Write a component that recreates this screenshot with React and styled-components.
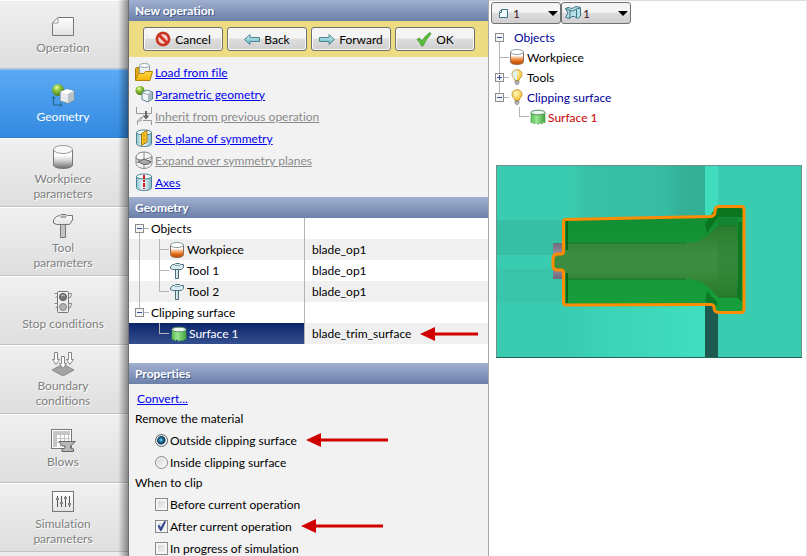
import React, { useState } from "react";
import styled, { createGlobalStyle } from "styled-components";

const GlobalStyle = createGlobalStyle`
  * {
    box-sizing: border-box;
  }

  body {
    margin: 0;
    background: #fff;
    color: #000;
    font-family: Lato, "Open Sans", sans-serif;
    font-size: 12px;
    line-height: 15px;
    font-variant-ligatures: none;
  }

  button, select, input {
    font: inherit;
    margin: 0;
  }

  svg {
    display: block;
    flex: none;
  }
`;

/* gradients shared by all icons */
const IconDefs = () => (
  <Defs width="0" height="0" aria-hidden="true">
    <defs>
      <linearGradient id="grey" x2="0" y2="1">
        <stop offset="0.3" stopColor="#fff" />
        <stop offset="0.55" stopColor="#d8d8d8" />
        <stop offset="1" stopColor="#6c6c6c" />
      </linearGradient>
      <linearGradient id="paper" x2="0" y2="1">
        <stop offset="0" stopColor="#fff" />
        <stop offset="1" stopColor="#e2e2e2" />
      </linearGradient>
      <linearGradient id="orange" x2="0" y2="1">
        <stop offset="0.25" stopColor="#fff" />
        <stop offset="0.5" stopColor="#f3a468" />
        <stop offset="0.75" stopColor="#d9640f" />
        <stop offset="1" stopColor="#b94c00" />
      </linearGradient>
      <linearGradient id="green" x2="1" y2="0">
        <stop offset="0" stopColor="#5cc25a" />
        <stop offset="0.4" stopColor="#9be58f" />
        <stop offset="1" stopColor="#3fa53e" />
      </linearGradient>
      <linearGradient id="teal" x2="1" y2="0">
        <stop offset="0" stopColor="#8cc5d2" />
        <stop offset="0.45" stopColor="#f2fbfd" />
        <stop offset="1" stopColor="#7db6c4" />
      </linearGradient>
      <linearGradient id="arrowFill" x2="0" y2="1">
        <stop offset="0" stopColor="#d4f1f4" />
        <stop offset="1" stopColor="#5fb3c0" />
      </linearGradient>
      <linearGradient id="folder" x2="0" y2="1">
        <stop offset="0" stopColor="#ffd94d" />
        <stop offset="1" stopColor="#f5b400" />
      </linearGradient>
      <radialGradient id="ball" cx="0.4" cy="0.3" r="0.7">
        <stop offset="0" stopColor="#eaffb0" />
        <stop offset="0.4" stopColor="#8fc63a" />
        <stop offset="1" stopColor="#4a7d10" />
      </radialGradient>
      <radialGradient id="bulb" cx="0.4" cy="0.35" r="0.7">
        <stop offset="0" stopColor="#fff6c0" />
        <stop offset="1" stopColor="#f7bd28" />
      </radialGradient>
    </defs>
  </Defs>
);

const Icon = ({ w = 24, h = w, box = `0 0 ${w} ${h}`, children }) => (
  <svg width={w} height={h} viewBox={box} fill="none" aria-hidden="true">
    {children}
  </svg>
);

const OperationIcon = () => (
  <Icon>
    <path d="M7 3.5H22.5V21.5H1.5V9Z" fill="url(#paper)" stroke="#777" />
    <path d="M7 3.5V9H1.5Z" fill="#fff" stroke="#999" />
  </Icon>
);

const GeometryIcon = () => (
  <Icon>
    <circle cx="7" cy="7" r="6" fill="url(#ball)" />
    <path d="M2.500 14V22H11M.5 15.500 2.500 13.500 4.500 15.500M9 20 11 22 9 24" stroke="#23627d" />
    <path d="M9 9 16 6 23 8V17L17 20.500 9 18Z" fill="#e7ebed" stroke="#5c8792" />
    <path d="M9 9 16 6 23 8 17 11Z" fill="#fff" />
    <path d="M17 11 23 8V17L17 20.500Z" fill="#b9c1c5" />
  </Icon>
);

const WorkpieceIcon = () => (
  <Icon>
    <path d="M2.500 4.500V20C2.500 22 7 23.500 12 23.500S21.500 22 21.500 20V4.500Z" fill="url(#grey)" stroke="#777" />
    <ellipse cx="12" cy="4.500" rx="9.500" ry="4" fill="#f8f8f8" stroke="#9a9a9a" />
  </Icon>
);

const ToolIcon = () => (
  <Icon>
    <path d="M9.500 9H14.500V23.500H9.500Z" fill="#c4c4c4" stroke="#777" />
    <path d="M2.500 6 5.500 2.500 9 1.500 10 .5H15L16 1.500H21.500V6L18.500 10.500H5.500L2.500 9Z" fill="url(#paper)" stroke="#777" />
    <path d="M9 4H15L16 1.500H10Z" fill="#aaa" />
  </Icon>
);

const StopIcon = () => (
  <Icon>
    <path d="M3.500 3.500H7V6L4.500 7.500M17 3.500H20.500L19.500 7.500 17 8M3.500 13.500H7V17L4.500 17.500M17 13.500H20.500L19.500 17.500 17 18" stroke="#888" fill="#eee" />
    <rect x="6.500" y="1.500" width="11" height="21" rx="1" fill="#ececec" stroke="#777" />
    <circle cx="12" cy="7" r="3.500" fill="#777" stroke="#555" />
    <circle cx="12" cy="17" r="3.500" fill="#b3b3b3" stroke="#888" />
    <path d="M10 6Q12 4 14 6" stroke="#ccc" />
  </Icon>
);

const BoundaryIcon = () => (
  <Icon>
    <path d="M12 12 23 18 12 24 1 18Z" fill="#a3a3a3" stroke="#8c8c8c" />
    {[[5, 0], [19, 0], [12, 4]].map(([x, y]) => (
      <path
        key={x}
        d={`M${x - 1.5} ${y + 0.5}H${x + 1.5}V${y + 7.5}H${x + 3.5}L${x} ${y + 12.5}L${x - 3.5} ${y + 7.5}H${x - 1.5}Z`}
        fill="#fff"
        stroke="#858585"
      />
    ))}
  </Icon>
);

const BlowsIcon = () => (
  <Icon w={26} h={24}>
    <rect x="1.500" y="1.500" width="20" height="19" fill="#fff" stroke="#777" />
    <path d="M3 3H20V6H6V19H3Z" fill="#c8c8c8" />
    <path d="M3 6.500H20M3 10.500H20M3 14.500H20M6.500 3V19M10.500 3V19M14.500 3V19M18.500 3V19" stroke="#c4c4c4" />
    <path d="M9 13.500H25.500L20.500 18V20L23.500 21V23.500H12V21L15 20V18H12Z" fill="#b8b8b8" stroke="#666" />
  </Icon>
);

const SimulationIcon = () => (
  <Icon>
    <rect x="1.500" y="1.500" width="21" height="20" fill="url(#paper)" stroke="#777" />
    {[[6.5, 9], [10.5, 13], [14.5, 8], [18.5, 14]].map(([x, y]) => (
      <g key={x}>
        <path d={`M${x} 6V17`} stroke="#555" />
        <circle cx={x} cy={y} r="1" fill="#eee" stroke="#555" />
      </g>
    ))}
  </Icon>
);

const CancelIcon = () => (
  <Icon w={16}>
    <circle cx="8" cy="8" r="6" fill="#f3d5cf" stroke="#cf3420" strokeWidth="2.500" />
    <path d="M4 4 12 12" stroke="#cf3420" strokeWidth="3" />
    <circle cx="8" cy="8" r="7" stroke="#a8402f" strokeWidth="0.500" />
  </Icon>
);

const BackIcon = () => (
  <Icon w={16}>
    <path d="M.5 8.500 6 3.500V6.500H15.500V10.500H6V13.500Z" fill="url(#arrowFill)" stroke="#4b8791" />
  </Icon>
);

const ForwardIcon = () => (
  <Icon w={16}>
    <path d="M15.500 8.500 10 3.500V6.500H.5V10.500H10V13.500Z" fill="url(#arrowFill)" stroke="#4b8791" />
  </Icon>
);

const OkIcon = () => (
  <Icon w={16}>
    <path d="M1 8.500 3.500 7 6 10Q9 4.500 14 1.500L15 3Q10 8 7 15H5.500Q4 11 1 8.500Z" fill="#5cbf3a" stroke="#3b8c25" strokeWidth="0.700" />
  </Icon>
);

const FolderIcon = () => (
  <Icon w={18}>
    <path d="M.5 16.500V5.500L1.500 4.500H5L6 6.500H14V16.500Z" fill="#e2a51a" stroke="#a87808" />
    <path d="M4.500 2.500V11H14.500V2.500Z" fill="url(#paper)" stroke="#8ba5ab" />
    <ellipse cx="9.500" cy="2.500" rx="5" ry="2" fill="#fff" stroke="#8ba5ab" />
    <path d="M.5 17.500 3.500 10.500H9L10.500 8.500H17.500L15 17.500Z" fill="url(#folder)" stroke="#b5840f" />
  </Icon>
);

const ParametricIcon = () => (
  <Icon w={18}>
    <circle cx="5" cy="5.500" r="4.500" fill="url(#ball)" />
    <path d="M7 7.500 12 5 17.500 7V14L13 17 7 14.500Z" fill="#f1f4f5" stroke="#5c8792" />
    <path d="M13 10 17 7.500V14L13 16.500Z" fill="#a4b8bd" />
    <path d="M7.500 8 13 9.500 17 7" stroke="#9ab" />
  </Icon>
);

const InheritIcon = () => (
  <Icon w={18}>
    <path d="M1.500 0V6.500H16.500V0M2.500 18V14L6 10.500H8M16.500 18V13.500H8M2.500 14H6V10.500" stroke="#999" />
    <path d="M11 4V9" stroke="#666" strokeWidth="2" />
    <path d="M7.500 8.500H14.500L11 12.500Z" fill="#666" />
  </Icon>
);

const tealCylinder = (
  <>
    <path d="M1.500 3.500V14.500C1.500 16.500 5 17.500 9 17.500S16.500 16.500 16.500 14.500V3.500Z" fill="url(#teal)" stroke="#4d828e" />
    <ellipse cx="9" cy="3.500" rx="7.500" ry="2.500" fill="#f1fafb" stroke="#4d828e" />
  </>
);

const PlaneIcon = () => (
  <Icon w={18}>
    {tealCylinder}
    <path d="M6.500 4.500 12 1.500V13L6.500 16.500Z" fill="#ffc928" stroke="#9b7610" />
    <path d="M9 5V14" stroke="#b87b00" strokeDasharray="3 1" />
  </Icon>
);

const ExpandIcon = () => (
  <Icon w={18}>
    <ellipse cx="9" cy="6" rx="8" ry="5" fill="#f7f7f7" stroke="#888" />
    <path d="M1 6V12C1 15 5 17.500 9 17.500S17 15 17 12V6M9 1V17M1.500 8 16.500 11M1.500 11.500 16.500 6" stroke="#888" />
    <path d="M9 8 16 11Q14 14 9 13.500L3 11Z" fill="#aaa" stroke="#666" />
  </Icon>
);

const AxesIcon = () => (
  <Icon w={18}>
    {tealCylinder}
    <path d="M9 2V16" stroke="#d01818" strokeWidth="2" strokeDasharray="4 1 2 1" />
  </Icon>
);

const OrangeCylinder = () => (
  <Icon w={16}>
    <path d="M1.500 3.500V12.500C1.500 14.500 4.500 15.500 8 15.500S14.500 14.500 14.500 12.500V3.500Z" fill="url(#orange)" stroke="#8d6a55" />
    <ellipse cx="8" cy="3" rx="6.500" ry="2.500" fill="#fff" stroke="#8c9da2" />
  </Icon>
);

const GreenSurface = () => (
  <Icon w={16}>
    <path d="M1 3.500V14L2.500 13 4 15 6 13.500 8 15.500 10 14 12 15 13.500 13 15 14V3.500Z" fill="url(#green)" stroke="#4aa048" strokeWidth="0.600" />
    <ellipse cx="8" cy="3.500" rx="7" ry="2.300" fill="#eaf7ec" stroke="#5d8d6c" />
  </Icon>
);

const HammerIcon = () => (
  <Icon w={16}>
    <path d="M6.500 6H9.500V15.500H6.500Z" fill="url(#teal)" stroke="#4b6c77" />
    <path d="M1.500 4 3.500 1.500H5.500L6.500.5H10.500L11.500 1.500H14.500V4.500L12.500 6.500H3.500L1.500 5.500Z" fill="#dcebef" stroke="#4b7482" />
    <path d="M6 2.500H11" stroke="#86a9b4" />
  </Icon>
);

const BulbIcon = ({ half }) => (
  <Icon w={12} h={16}>
    <path d="M6 .7C3 .7 1 2.800 1 5.500 1 8 3.500 9 4 11.500H8C8.500 9 11 8 11 5.500 11 2.800 9 .7 6 .7Z" fill="url(#bulb)" stroke="#c99c36" />
    {half && <path d="M6 1.200C3.500 1.200 1.500 3 1.500 5.500 1.500 8 4 9 4.500 11H6Z" fill="#e0f1f7" />}
    <path d="M4 12H8V14L7 15.500H5L4 14Z" fill="#b0b4b8" stroke="#777" strokeWidth="0.600" />
  </Icon>
);

const PageIcon = () => (
  <Icon w={16}>
    <path d="M6.500 4.500H12.500V12.500H4.500V6.500Z" fill="#f4fbfc" stroke="#3c7584" />
    <path d="M6.500 5V7.500H4" stroke="#3c7584" />
  </Icon>
);

const MapIcon = () => (
  <Icon w={16}>
    <path d="M.5 3.500 3 2.500 7 3.500 11 1.500 15.500 2.500V11L12.500 13.500 9.500 11.500H7L4.500 13.500.5 12.500 3 8Z" fill="#b9dfe7" stroke="#3c7584" />
    <path d="M.5 3.500 5 5.500 8 6 11.500 4 15 3M5 5.500V9L4.500 13M11.500 4.500V13" stroke="#3c7584" />
  </Icon>
);

const RedArrow = ({ length }) => (
  <Pointer width={length} height="16" aria-hidden="true">
    <path d={`M12 8H${length}`} stroke="#d00000" strokeWidth="3" />
    <path d="M0 8 15 1V15Z" fill="#d00000" />
  </Pointer>
);

/* one row's worth of tree connectors */
const Branch = ({ w, h = 21, trunk, lines, expand, boxX = 6 }) => {
  const m = Math.floor(h / 2);
  const top = m - 4;
  return (
    <svg width={w} height={h} aria-hidden="true" shapeRendering="crispEdges">
      {trunk && <path d={trunk} stroke="#b4b4b4" fill="none" />}
      {lines && <path d={lines} stroke="#b4b4b4" fill="none" />}
      {expand && (
        <g>
          <rect x={boxX + 0.5} y={top + 0.5} width="8" height="8" fill="#f4f4f4" stroke="#8c8c8c" />
          <path d={`M${boxX + 2} ${m + 0.5}h5`} stroke="#3350a0" />
          {expand === "plus" && <path d={`M${boxX + 4.5} ${m - 2}v5`} stroke="#3350a0" />}
        </g>
      )}
    </svg>
  );
};

const steps = [
  { label: "Operation", icon: OperationIcon },
  { label: "Geometry", icon: GeometryIcon },
  { label: "Workpiece\nparameters", icon: WorkpieceIcon },
  { label: "Tool\nparameters", icon: ToolIcon },
  { label: "Stop conditions", icon: StopIcon },
  { label: "Boundary\nconditions", icon: BoundaryIcon },
  { label: "Blows", icon: BlowsIcon },
  { label: "Simulation\nparameters", icon: SimulationIcon },
];

const actions = [
  { label: "Cancel", icon: CancelIcon },
  { label: "Back", icon: BackIcon },
  { label: "Forward", icon: ForwardIcon },
  { label: "OK", icon: OkIcon },
];

const links = [
  { label: "Load from file", icon: FolderIcon },
  { label: "Parametric geometry", icon: ParametricIcon },
  { label: "Inherit from previous operation", icon: InheritIcon, disabled: true },
  { label: "Set plane of symmetry", icon: PlaneIcon },
  { label: "Expand over symmetry planes", icon: ExpandIcon, disabled: true },
  { label: "Axes", icon: AxesIcon },
];

const geometry = [
  { name: "Objects", w: 22, expand: "minus", trunk: "M10.500 11V21M15 10.500H20" },
  { name: "Workpiece", w: 40, value: "blade_op1", icon: OrangeCylinder, trunk: "M10.500 0V21", lines: "M30.500 0V21M30 10.500H40" },
  { name: "Tool 1", w: 40, value: "blade_op1", icon: HammerIcon, trunk: "M10.500 0V21", lines: "M30.500 0V21M30 10.500H40" },
  { name: "Tool 2", w: 40, value: "blade_op1", icon: HammerIcon, trunk: "M10.500 0V21", lines: "M30.500 0V10.500H40" },
  { name: "Clipping surface", w: 22, expand: "minus", trunk: "M10.500 0V10M15 10.500H20" },
  { name: "Surface 1", w: 42, value: "blade_trim_surface", icon: GreenSurface, lines: "M30.500 0V10.500H40", selected: true, arrow: 58 },
];

const Viewport = () => (
  <Scene viewBox="0 0 306 193" role="img" aria-label="Clipped workpiece">
    <defs>
      <linearGradient id="upper" x2="1" y2="0">
        <stop offset="0" stopColor="#3accb0" />
        <stop offset="0.080" stopColor="#38c1a6" />
        <stop offset="0.700" stopColor="#37bca2" />
        <stop offset="0.800" stopColor="#35b299" />
        <stop offset="1" stopColor="#34ad95" />
      </linearGradient>
      <linearGradient id="lower" x2="1" y2="0">
        <stop offset="0" stopColor="#3accb0" />
        <stop offset="0.200" stopColor="#3cd2b6" />
        <stop offset="1" stopColor="#41debf" />
      </linearGradient>
      <linearGradient id="body" x2="0" y2="1">
        <stop offset="0" stopColor="#138d33" />
        <stop offset="1" stopColor="#179f3b" />
      </linearGradient>
      <linearGradient id="shaft" x2="0" y2="1">
        <stop offset="0" stopColor="#2a7b2d" />
        <stop offset="0.400" stopColor="#3d8c42" />
        <stop offset="0.650" stopColor="#3b8b3f" />
        <stop offset="1" stopColor="#267828" />
      </linearGradient>
      <linearGradient id="pin" x2="0" y2="1">
        <stop offset="0" stopColor="#6f6b7c" />
        <stop offset="0.500" stopColor="#aaa5b8" />
        <stop offset="1" stopColor="#6f6b7c" />
      </linearGradient>
    </defs>
    <rect width="306" height="193" fill="#3accb0" />
    <rect x="78" width="131" height="60" fill="url(#upper)" />
    <rect x="209" width="13" height="60" fill="#40dcbe" />
    <rect y="55" width="70" height="35" fill="#37bfa4" />
    <rect y="104" width="70" height="34" fill="#39c5aa" />
    <rect x="78" y="135" width="131" height="58" fill="url(#lower)" />
    <rect x="209" y="135" width="13" height="58" fill="#1d5b50" />
    <rect x="57" y="78" width="12" height="36" fill="url(#pin)" />
    <path
      d="M67.500 57Q67.500 54.500 70 54.500L140 53 215 51.500Q219 51 219 46 219 41.500 223 41.500H245Q248 41.500 248 45V144Q248 147.500 245 147.500H222Q218 147 218 142 218 139.500 214 139.500L70 140Q67.500 140 67.500 137V107Q67.500 105 65 105H62Q58 105 58 101V94Q58 89 62 89H65Q67.500 89 67.500 86Z"
      fill="url(#body)"
    />
    <path d="M219 43H247V52H222L211 68 209 60Z" fill="#0a741f" />
    <path d="M211 126 221 137V141H215L209 136Z" fill="#0b7a25" />
    <path d="M221 53H241V60H221Z" fill="#128532" />
    <path d="M242 57H246V137L241 132Z" fill="#0c7825" />
    <path d="M59 90 68 87V78H190C209 78 213 67 222 61H241Q243 96 241 132H222C213 124 209 114 190 114H68V104H59Z" fill="url(#shaft)" />
    <path d="M222 61H241Q243 96 241 132H222Z" fill="#2c8232" opacity="0.500" />
    <path d="M222 61H241M222 132H241M68 78H190M68 114H190" stroke="#1c7326" />
    <path d="M71 56V85M71 108V138" stroke="#08631b" strokeWidth="2" />
    <path
      d="M67.500 57Q67.500 54.500 70 54.500L140 53 215 51.500Q219 51 219 46 219 41.500 223 41.500H245Q248 41.500 248 45V144Q248 147.500 245 147.500H222Q218 147 218 142 218 139.500 214 139.500L70 140Q67.500 140 67.500 137V107Q67.500 105 65 105H62Q57 105 57 101V94Q57 89 62 89H65Q67.500 89 67.500 86Z"
      fill="none"
      stroke="#fe8c00"
      strokeWidth="3"
    />
    <path d="M.5 193V.5H305.500V193" fill="none" stroke="#6f8f89" />
    <path d="M0 192.500H306" stroke="#1f665b" />
  </Scene>
);

const App = () => {
  const [step, setStep] = useState("Geometry");
  const [side, setSide] = useState("outside");
  const [clip, setClip] = useState({ before: false, after: true, progress: false });

  const toggle = (key) => setClip({ ...clip, [key]: !clip[key] });

  return (
    <>
      <GlobalStyle />
      <IconDefs />
      <Layout>
        <Sidebar>
          {steps.map(({ label, icon: StepIcon }) => (
            <Step key={label} $active={step === label} onClick={() => setStep(label)}>
              <StepIcon />
              <StepLabel>{label}</StepLabel>
            </Step>
          ))}
        </Sidebar>

        <Panel>
          <Header>New operation</Header>
          <Toolbar>
            {actions.map(({ label, icon: ActionIcon }) => (
              <Action key={label}>
                <ActionIcon />
                {label}
              </Action>
            ))}
          </Toolbar>
          <LinkList>
            {links.map(({ label, icon: LinkIcon, disabled }) => (
              <LinkRow key={label}>
                <LinkIcon />
                <TextLink href="#" $disabled={disabled}>{label}</TextLink>
              </LinkRow>
            ))}
          </LinkList>

          <Header>Geometry</Header>
          <TableArea>
            <Table>
              <tbody>
                {geometry.map(({ name, value, w, icon: RowIcon, selected, arrow, ...branch }) => (
                  <tr key={name}>
                    <NameCell $selected={selected}>
                      <Line>
                        <Branch w={w} {...branch} />
                        {RowIcon && <RowIcon />}
                        <RowText $gap={RowIcon ? 2 : 0}>{name}</RowText>
                      </Line>
                    </NameCell>
                    <ValueCell>
                      <Line>
                        {value}
                        {arrow && <RedArrow length={arrow} />}
                      </Line>
                    </ValueCell>
                  </tr>
                ))}
              </tbody>
            </Table>
          </TableArea>

          <Header>Properties</Header>
          <Properties>
            <ConvertRow>
              <TextLink href="#">Convert...</TextLink>
            </ConvertRow>
            <Group>
              <Legend>Remove the material</Legend>
              <Option>
                <label>
                  <Radio name="side" checked={side === "outside"} onChange={() => setSide("outside")} />
                  Outside clipping surface
                </label>
                <RedArrow length={82} />
              </Option>
              <Option>
                <label>
                  <Radio name="side" checked={side === "inside"} onChange={() => setSide("inside")} />
                  Inside clipping surface
                </label>
              </Option>
            </Group>
            <Group>
              <Legend>When to clip</Legend>
              <Option>
                <label>
                  <Check checked={clip.before} onChange={() => toggle("before")} />
                  Before current operation
                </label>
              </Option>
              <Option>
                <label>
                  <Check checked={clip.after} onChange={() => toggle("after")} />
                  After current operation
                </label>
                <RedArrow length={82} />
              </Option>
              <Option>
                <label>
                  <Check checked={clip.progress} onChange={() => toggle("progress")} />
                  In progress of simulation
                </label>
              </Option>
            </Group>
          </Properties>
        </Panel>

        <Viewer>
          <Pickers>
            <Picker>
              <PageIcon />
              <select aria-label="Operation number" defaultValue="1">
                <option>1</option>
              </select>
            </Picker>
            <Picker>
              <MapIcon />
              <select aria-label="Surface number" defaultValue="1">
                <option>1</option>
              </select>
            </Picker>
          </Pickers>
          <Tree>
            <TreeRow $color="#00009c">
              <Branch w={25} h={20} expand="minus" trunk="M10.500 10V20" />
              Objects
            </TreeRow>
            <TreeRow>
              <Branch w={20} h={20} trunk="M10.500 0V20M10 10.500H20" />
              <OrangeCylinder />
              <RowText $gap={2}>Workpiece</RowText>
            </TreeRow>
            <TreeRow>
              <Branch w={22} h={20} expand="plus" trunk="M10.500 0V20M10 10.500H20" />
              <BulbIcon half />
              <RowText $gap={4}>Tools</RowText>
            </TreeRow>
            <TreeRow $color="#00009c">
              <Branch w={22} h={20} expand="minus" trunk="M10.500 0V10.500H20" />
              <BulbIcon />
              <RowText $gap={4}>Clipping surface</RowText>
            </TreeRow>
            <TreeRow $color="#c80000">
              <Branch w={41} h={20} trunk="M30.500 0V9.500H40" />
              <GreenSurface />
              <RowText $gap={2}>Surface 1</RowText>
            </TreeRow>
          </Tree>
          <Viewport />
        </Viewer>
      </Layout>
    </>
  );
};

export default App;

const Defs = styled.svg`
  position: absolute;
`;

const Layout = styled.div`
  display: grid;
  grid-template-columns: 129px 360px minmax(0, 1fr);
  height: 100vh;
  overflow: hidden;
  border-right: 1px solid #e4e4e4;
`;

const Sidebar = styled.nav`
  position: relative;
  background: #ececec;
  border-right: 1px solid #6e6e6e;

  &::after {
    content: "";
    position: absolute;
    top: 0;
    right: 0;
    bottom: 0;
    width: 10px;
    background: linear-gradient(to right, transparent, rgba(0, 0, 0, 0.4));
    pointer-events: none;
  }
`;

const Step = styled.button`
  display: flex;
  flex-direction: column;
  align-items: center;
  justify-content: center;
  gap: 2px;
  width: 100%;
  height: 69px;
  padding: 0 2px 0 0;
  border: none;
  border-top: 1px solid ${(props) => (props.$active ? "#8cc4f8" : "#fff")};
  border-bottom: 1px solid ${(props) => (props.$active ? "#2a7ac8" : "#c2c2c2")};
  background: ${(props) =>
    props.$active ? "linear-gradient(#5aa9f5, #338ae0)" : "linear-gradient(#f0f0f0, #dedede)"};
  color: ${(props) => (props.$active ? "#fff" : "#808080")};
  text-shadow: ${(props) => (props.$active ? "none" : "1px 1px 0 #fff")};
  cursor: pointer;
`;

const StepLabel = styled.span`
  text-align: center;
  white-space: pre-line;
`;

const Panel = styled.main`
  display: flex;
  flex-direction: column;
  background: #f2f2f2;
  border-right: 1px solid #a8a8a8;
`;

const Header = styled.h2`
  flex: none;
  height: 21px;
  margin: 0;
  padding: 0 6px;
  background: linear-gradient(#a0b0d0, #6d80aa);
  color: #fff;
  font-size: 12px;
  font-weight: 700;
  line-height: 21px;
  text-shadow: 1px 1px 0 #4a5f8c;
`;

const Toolbar = styled.div`
  display: flex;
  flex: none;
  gap: 4px;
  padding: 6px 13px 6px 14px;
  background: #eedc82;
`;

const Action = styled.button`
  display: flex;
  flex: 1;
  align-items: center;
  justify-content: center;
  gap: 4px;
  height: 24px;
  padding: 0;
  border: 1px solid #707070;
  border-radius: 3px;
  background: linear-gradient(#f4f4f4 45%, #dedede 50%, #cfcfcf);
  box-shadow: inset 0 0 0 1px #fafafa;
  color: #000;
`;

const LinkList = styled.ul`
  flex: none;
  margin: 0;
  padding: 4px 6px;
  list-style: none;
`;

const LinkRow = styled.li`
  display: flex;
  align-items: center;
  gap: 2px;
  height: 22px;
`;

const TextLink = styled.a`
  color: ${(props) => (props.$disabled ? "#8a8a8a" : "#0000f0")};
  text-decoration: underline;
`;

const TableArea = styled.div`
  flex: none;
  padding-bottom: 19px;
  background: #fff;
`;

const NameCell = styled.td`
  width: 176px;
  padding: 0;
  border-right: 1px solid #b4b4b4;
  background: ${(props) => (props.$selected ? "linear-gradient(#0a246a, #35508f)" : "transparent")};
  color: ${(props) => (props.$selected ? "#fff" : "#000")};
`;

const ValueCell = styled.td`
  padding: 0 0 0 7px;
`;

const Table = styled.table`
  width: 100%;
  border-collapse: separate;
  border-spacing: 0;
  table-layout: fixed;

  tr:nth-child(even) {
    background: #f0f0f0;
  }
`;

const Line = styled.div`
  display: flex;
  align-items: center;
  height: 21px;
`;

const RowText = styled.span`
  margin-left: ${(props) => props.$gap}px;
`;

const Pointer = styled.svg`
  margin-left: 9px;
`;

const Properties = styled.section`
  padding: 4px 6px;
`;

const ConvertRow = styled.div`
  height: 21px;
  padding-left: 2px;
  line-height: 21px;
`;

const Group = styled.fieldset`
  margin: 0;
  padding: 0;
  border: none;
`;

const Legend = styled.legend`
  padding: 0;
  height: 20px;
  line-height: 20px;
`;

const Option = styled.div`
  display: flex;
  align-items: center;
  height: 22px;
  padding-left: 20px;

  label {
    display: flex;
    align-items: center;
    gap: 2px;
  }
`;

const Radio = styled.input.attrs({ type: "radio" })`
  appearance: none;
  width: 13px;
  height: 13px;
  border: 1px solid #8a8a8a;
  border-radius: 50%;
  background: linear-gradient(135deg, #cfd3d6, #fff);
  box-shadow: inset 0 0 0 1px #f6f6f6;

  &:checked {
    border-color: #56606a;
    background: radial-gradient(circle at 5px 5px, #8fdcf5 0, #1f6f9c 2px, #0d3550 4px, #e6eaec 5px);
  }
`;

const Check = styled.input.attrs({ type: "checkbox" })`
  appearance: none;
  width: 13px;
  height: 13px;
  border: 1px solid #8a8a8a;
  background: linear-gradient(135deg, #cdd1d5, #f8f8f8);
  box-shadow: inset 0 0 0 2px #f6f6f6;

  &:checked::after {
    content: "";
    display: block;
    width: 11px;
    height: 11px;
    background: #33478f;
    clip-path: polygon(14% 45%, 30% 40%, 43% 62%, 76% 5%, 92% 8%, 50% 95%, 38% 95%);
  }
`;

const Viewer = styled.aside`
  padding: 1px 4px 0 7px;
  border-top: 1px solid #dcdcdc;
  background: #fff;
`;

const Pickers = styled.div`
  display: flex;
  margin-left: -5px;
`;

const Picker = styled.div`
  position: relative;

  svg {
    position: absolute;
    top: 3px;
    left: 4px;
  }

  &::after {
    content: "";
    position: absolute;
    top: 9px;
    right: 3px;
    border: 5px solid transparent;
    border-top-color: #000;
    border-bottom: none;
    pointer-events: none;
  }

  select {
    appearance: none;
    width: 70px;
    height: 22px;
    padding: 0 0 0 21px;
    border: 1px solid #707070;
    border-radius: 3px;
    background: linear-gradient(#f4f4f4 45%, #dedede 50%, #cfcfcf);
    color: #3c1420;
  }
`;

const Tree = styled.div`
  margin: 3px 0 38px -7px;
`;

const TreeRow = styled.div`
  display: flex;
  align-items: center;
  height: 20px;
  color: ${(props) => props.$color || "#000"};
`;

const Scene = styled.svg`
  width: 100%;
  height: auto;
`;
